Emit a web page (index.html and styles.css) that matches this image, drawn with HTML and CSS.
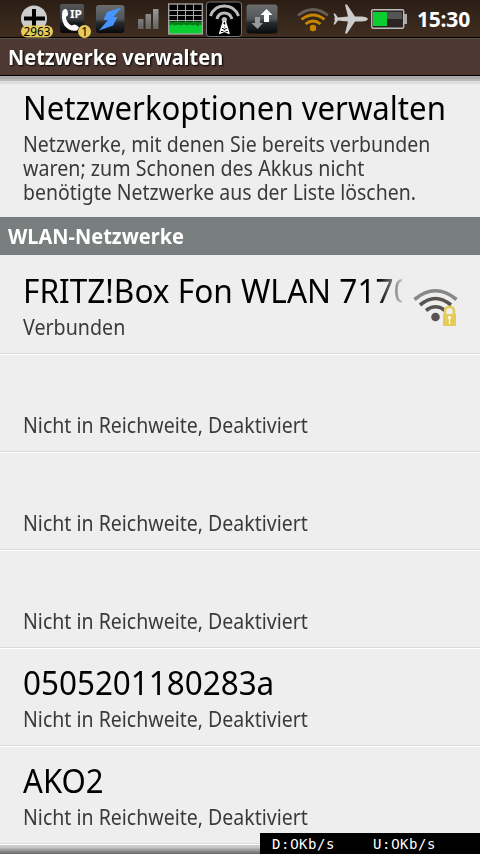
FILE: index.html
```html
<!DOCTYPE html>
<html lang="de">
<head>
<meta charset="utf-8">
<title>Netzwerke verwalten</title>
<link rel="stylesheet" href="styles.css">
</head>
<body>
<main class="screen">
  <header class="status">
    <svg class="i-msg" width="38" height="38" viewBox="18 0 38 38">
      <circle cx="34" cy="18.500" r="13" fill="#ccc"/>
      <path d="M34 9V28M24 18.500H45" stroke="#000" stroke-width="4"/>
      <rect x="21" y="25.500" width="32" height="12" rx="6" fill="#e5cc59"/>
      <text x="37" y="36" text-anchor="middle" class="badge" textLength="27" lengthAdjust="spacingAndGlyphs">2963</text>
    </svg>
    <svg class="i-call" width="36" height="38" viewBox="57 0 36 38">
      <defs><linearGradient id="tile" x2="0" y2="1"><stop stop-color="#555"/><stop offset=".5" stop-color="#3c4042"/><stop offset=".65" stop-color="#1c1c1c"/><stop offset="1" stop-color="#060606"/></linearGradient></defs>
      <rect x="60" y="4" width="24" height="29" rx="2" fill="url(#tile)"/>
      <path d="M62.500 11q2.500-3.500 5-.5l.6 4q-.3 1.500-2.300 2.500q.8 6 5.600 8.400l3.200-1q2.500.3 4.500 3.200l-2 2.800q-4 1.200-8-1Q60 24.500 62.500 11z" fill="#fff"/>
      <text x="76" y="18" text-anchor="middle" class="ip" textLength="12" lengthAdjust="spacingAndGlyphs">IP</text>
      <circle cx="84.500" cy="31.500" r="6.500" fill="#e5cc59"/>
      <text x="84.500" y="36" text-anchor="middle" class="badge">1</text>
    </svg>
    <svg class="i-bolt" width="34" height="38" viewBox="93 0 34 38">
      <defs><linearGradient id="tile2" x2="0" y2="1"><stop stop-color="#6c6c6c"/><stop offset=".5" stop-color="#50565a"/><stop offset=".62" stop-color="#292d30"/><stop offset="1" stop-color="#090909"/></linearGradient></defs>
      <rect x="96" y="5" width="28.500" height="28" rx="3" fill="url(#tile2)"/>
      <path d="M121.500 7.500L107 12L103.500 20L108 20L99 30.500L113 25.500L117.500 17L113.500 17z" fill="#4594ff"/>
    </svg>
    <svg class="i-signal" width="30" height="38" viewBox="132 0 30 38">
      <defs><linearGradient id="bars" x2="0" y2="1"><stop stop-color="#999"/><stop offset="1" stop-color="#62625f"/></linearGradient></defs>
      <path d="M138 19h5.500v10H138zM145.500 14h5.500v15h-5.500zM153 9h5.500v20H153z" fill="url(#bars)"/>
    </svg>
    <svg class="i-grid" width="37" height="38" viewBox="167 0 37 38">
      <rect x="168.500" y="4" width="34" height="30" fill="#000"/>
      <path d="M169 22h33v12h-33z" fill="#0bce31"/>
      <path d="M169 21.500h33v4l-2-1-2 2-3-2-2 1-3-1-3 1-3-1-3 1-3-1-3 1-3-1-3 1z" fill="#087d19"/>
      <path d="M177.500 4v17.500M185.500 4v17.500M193.500 4v17.500M169 10.500h33M169 15.500h33M169 20.500h33" stroke="#aaa" stroke-width="1"/>
      <rect x="168.700" y="4" width="33.600" height="30" fill="none" stroke="#aaa" stroke-width="1.300"/>
    </svg>
    <svg class="i-tower" width="39" height="38" viewBox="205 0 39 38">
      <rect x="206.500" y="2" width="35" height="34.500" rx="3" fill="#000" stroke="#777"/>
      <g fill="none" stroke="#bbb" stroke-width="3"><path d="M210.500 16Q214 6 224.300 6T238.500 16"/><path d="M217 19Q218.500 13 224.300 13T232 19"/></g>
      <circle cx="224.300" cy="19.500" r="2.600" fill="#bbb"/>
      <path d="M223.500 21L219.500 34M225.200 21L229.200 34M222.500 24l4 3-5 3 7 3M226.500 24l-4 3 5 3-7 3" fill="none" stroke="#fff" stroke-width="1.400"/>
    </svg>
    <svg class="i-sync" width="35" height="38" viewBox="245 0 35 38">
      <rect x="246.500" y="4.500" width="31" height="29" rx="3" fill="url(#tile2)"/>
      <path d="M266.500 9l6 6h-3.500v7h-5v-7h-3.500z" fill="#fff"/>
      <path d="M255 17h5v6h3l-5.500 6-6-6h3.500z" fill="#999"/>
    </svg>
    <svg class="i-wifi" width="36" height="38" viewBox="295 0 36 38">
      <g fill="none" stroke-width="2.800"><path d="M298 15.500Q313 3.500 328 15.500" stroke="#655d56"/><path d="M301.500 19.500Q313 10.500 324.500 19.500M305.500 24Q313 18 320.500 24" stroke="#c98500"/></g>
      <circle cx="313" cy="28" r="3.200" fill="#c98500"/>
    </svg>
    <svg class="i-plane" width="38" height="38" viewBox="332 0 38 38">
      <path d="M368 19q-1-2.500-7-2.500h-6l-8-12h-2l3 12-10 1-3-4h-1.500l1.500 4.500-1 1 1 1-1.500 4.500h1.500l3-4 10 1-3 12h2l8-12h6q6 0 7-2.500z" fill="#ccc"/>
    </svg>
    <svg class="i-battery" width="38" height="38" viewBox="370 0 38 38">
      <rect x="371.700" y="9.700" width="32" height="18.600" rx="1.500" fill="#2a2522" stroke="#bbb" stroke-width="1.400"/>
      <rect x="373" y="12" width="14" height="14" fill="#0bce31"/>
      <rect x="387" y="12" width="15" height="7" fill="#555"/>
      <rect x="404" y="14" width="3" height="10" fill="#aaa"/>
    </svg>
    <time class="clock">15:30</time>
  </header>
  <div class="titlebar"><span>Netzwerke verwalten</span></div>
  <section class="options">
    <h1 class="name"><span>Netzwerkoptionen verwalten</span></h1>
    <p class="detail"><span>Netzwerke, mit denen Sie bereits verbunden</span><br><span class="wide">waren; zum Schonen des Akkus nicht</span><br><span class="narrow">benötigte Netzwerke aus der Liste löschen.</span></p>
  </section>
  <h2 class="category"><span>WLAN-Netzwerke</span></h2>
  <ul class="networks">
    <li class="network connected">
      <div class="text"><div class="name clip"><span class="ssid">FRITZ!Box Fon WLAN 7170</span></div><p class="detail"><span class="wide">Verbunden</span></p></div>
      <svg class="lockwifi" width="48" height="42" viewBox="411 286 48 42">
        <g fill="none" stroke-width="3.600"><path d="M414.500 299.500Q435.500 282 456.500 299.500" stroke="#888"/><path d="M420 305Q435.500 292 451 305M426 310.500Q435.500 303 445 310.500" stroke="#575350"/></g>
        <circle cx="435.500" cy="317" r="4.300" fill="#575350"/>
        <path d="M445 315v-4q0-4 4.500-4t4.500 4v4" fill="#eee" stroke="#e5cc59" stroke-width="2.600"/>
        <rect x="443" y="314" width="13" height="12" fill="#e5cc59"/>
        <path d="M449.500 318v6" stroke="#fff" stroke-width="1.200"/><circle cx="449.500" cy="317.500" r="1.600" fill="#fff"/>
      </svg>
    </li>
    <li class="network"><div class="text"><div class="name"></div><p class="detail"><span>Nicht in Reichweite, Deaktiviert</span></p></div></li>
    <li class="network"><div class="text"><div class="name"></div><p class="detail"><span>Nicht in Reichweite, Deaktiviert</span></p></div></li>
    <li class="network"><div class="text"><div class="name"></div><p class="detail"><span>Nicht in Reichweite, Deaktiviert</span></p></div></li>
    <li class="network"><div class="text"><div class="name"><span class="digits">0505201180283a</span></div><p class="detail"><span>Nicht in Reichweite, Deaktiviert</span></p></div></li>
    <li class="network"><div class="text"><div class="name"><span>AKO2</span></div><p class="detail"><span>Nicht in Reichweite, Deaktiviert</span></p></div></li>
  </ul>
  <div class="fade"></div>
  <aside class="traffic"><span>D:<b>0</b>Kb/s</span><span>U:<b>0</b>Kb/s</span></aside>
</main>
</body>
</html>
```
FILE: styles.css
```css
* { box-sizing: border-box; }
body { margin: 0; font-family: "Noto Sans", sans-serif; }
h1, h2, p, ul { margin: 0; padding: 0; font-weight: 400; }
.screen { position: relative; width: 480px; height: 854px; overflow: hidden; background: #eee; }
.status { height: 38px; display: flex; align-items: center; padding-left: 18px; background: linear-gradient(#2b1d14, #35271b 50%, #402d20 96%, #050302 97%); }
.status svg { display: block; flex: none; }
.i-call { margin-left: 1px; }
.i-signal { margin-left: 5px; }
.i-grid { margin-left: 5px; }
.i-tower, .i-sync, .i-plane { margin-left: 1px; }
.i-wifi { margin-left: 15px; }
.badge { font: 12.5px "Noto Sans", sans-serif; fill: #000; }
.ip { font: bold 11px "Noto Sans", sans-serif; fill: #fff; }
.clock { margin-left: 9px; color: #fff; font-size: 21px; font-weight: 700; line-height: 38px; letter-spacing: -.2px; }
.titlebar { height: 38px; padding-left: 8px; background: #4d3932; border-top: 1px solid #5b514a; border-bottom: 1px solid #000; color: #fff; font-size: 21px; font-weight: 700; line-height: 37px; text-shadow: 1px 1px 2px #000; }
.titlebar span, .category span, .name span, .detail span { display: inline-block; vertical-align: top; white-space: nowrap; transform: scaleX(.952); transform-origin: 0 50%; }
.options { height: 141px; padding: 9px 23px 0; background: linear-gradient(#aaa 0 3px, #bbb 3px 5px, #ddd 5px 8px, #eee 8px); }
.name { height: 47px; color: #000; font-size: 33px; line-height: 45px; white-space: nowrap; }
.name span { transform: scaleX(.943); }
.name .ssid { transform: scaleX(.957); }
.name .digits { transform: scaleX(.952); }
.detail { color: #3a3a3a; font-size: 21px; line-height: 24px; white-space: nowrap; }
.detail span { transform: scaleX(.93); }
.detail .wide { transform: scaleX(.936); }
.detail .narrow { transform: scaleX(.926); }
.category { height: 38px; padding-left: 8px; background: #797f7e; color: #fff; font-size: 21px; font-weight: 700; line-height: 38px; }
.networks { list-style: none; }
.network { height: 98px; display: flex; padding: 13px 23px 0; border-bottom: 1px solid #d9d9d9; }
.network + .network { border-top: 1px solid #fff; padding-top: 11px; }
.text { flex: 1; min-width: 0; }
.network.connected { padding-right: 21px; height: 99px; }
.clip { overflow: hidden; width: 379px; -webkit-mask-image: linear-gradient(90deg, #000 355px, transparent 384px); mask-image: linear-gradient(90deg, #000 355px, transparent 384px); }
.lockwifi { flex: none; margin-top: 18px; }
.fade { height: 10px; background: linear-gradient(#fff 0 1px, #ccc 1px 3px, #aaa 5px, #666 10px); }
.traffic { position: absolute; right: 0; bottom: 0; width: 220px; height: 21px; display: flex; gap: 38px; padding-left: 12px; background: #000; color: #fff; font: 14px/23px "DejaVu Sans Mono", monospace; letter-spacing: .57px; }
.traffic b { display: inline-block; width: 9px; font-family: "DejaVu Sans", sans-serif; font-weight: 400; letter-spacing: 0; }
```
